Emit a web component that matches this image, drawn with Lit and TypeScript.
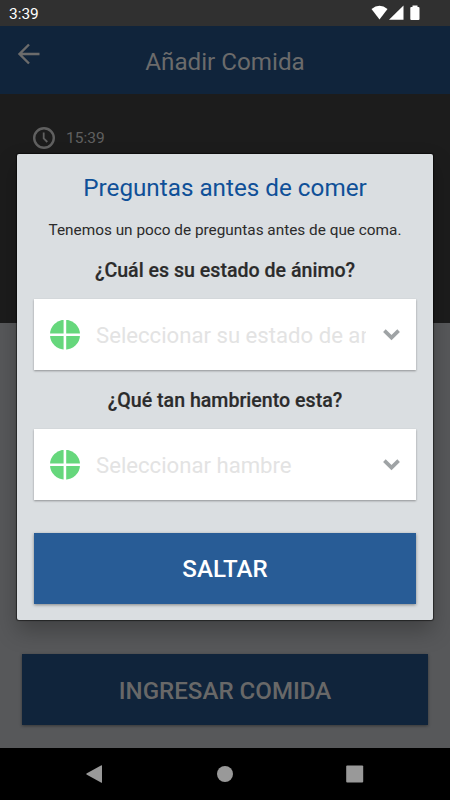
import { LitElement, html, css } from "lit";
import { customElement, property } from "lit/decorators.js";

@customElement("meal-select")
class MealSelect extends LitElement {
  @property() placeholder = "";

  static styles = css`
    :host {
      display: flex;
      align-items: center;
      box-sizing: border-box;
      height: 71px;
      padding: 0 16px;
      background: #fff;
      box-shadow: 0 1px 2px rgba(0, 0, 0, 0.35);
    }
    .mark { flex: none; width: 30px; height: 30px; }
    .text {
      flex: none;
      width: 270px;
      margin-left: 16px;
      overflow: hidden;
      white-space: nowrap;
      text-align: left;
      font: 400 22.15px/30px Roboto, sans-serif;
      color: #e3e3e3;
    }
    .chevron { flex: none; width: 17px; height: 12px; margin-left: 17px; }
  `;

  render() {
    return html`
      <svg class="mark" viewBox="0 0 30 30">
        <circle cx="15" cy="14.7" r="15" fill="#66d77c" />
        <path d="M14.9 -1V31M0 14.7H30" stroke="#fff" stroke-width="2.6" />
      </svg>
      <div class="text">${this.placeholder}</div>
      <svg class="chevron" viewBox="0 0 17 12">
        <path d="M1.4 1.6L8.5 8.6L15.6 1.6" fill="none" stroke="#9fa3a5" stroke-width="3.7" />
      </svg>
    `;
  }
}

@customElement("app-root")
class AppRoot extends LitElement {
  static styles = css`
    :host {
      display: flex;
      flex-direction: column;
      position: relative;
      width: 450px;
      height: 800px;
      overflow: hidden;
      font-family: Roboto, sans-serif;
      background: #57585a;
    }
    .status {
      display: flex;
      align-items: center;
      justify-content: space-between;
      box-sizing: border-box;
      height: 26px;
      padding: 0 29px 0 9px;
      background: #303030;
      color: #fff;
      font-size: 15.4px;
    }
    .clock { padding-top: 2px; }
    .signals { width: 50px; height: 18px; }
    .header {
      display: grid;
      grid-template-columns: 60px 1fr 60px;
      height: 68px;
      background: #10243b;
      color: #6b6b6b;
    }
    .back { width: 24px; height: 24px; margin: 16px 0 0 17px; }
    .title {
      margin-top: 21px;
      text-align: center;
      font-size: 24.2px;
      line-height: 30px;
    }
    .summary {
      box-sizing: border-box;
      height: 229px;
      padding: 32px 33px 0;
      background: #1c1c1c;
    }
    .time {
      display: flex;
      align-items: center;
      gap: 11px;
      color: #606060;
      font-size: 15.5px;
      line-height: 24px;
    }
    .dial { width: 22px; height: 22px; margin-bottom: 1px; }
    .content {
      flex: 1;
      display: flex;
      flex-direction: column;
      justify-content: flex-end;
      padding: 0 22px 23px;
    }
    .button {
      display: flex;
      align-items: center;
      justify-content: center;
      box-sizing: border-box;
      height: 71px;
      padding-top: 2px;
      font-size: 24.1px;
      font-weight: 500;
    }
    .submit {
      background: #10243b;
      color: #686868;
      box-shadow: 0 1px 3px rgba(0, 0, 0, 0.4);
    }
    .nav {
      display: grid;
      grid-template-columns: repeat(3, 130px);
      justify-content: center;
      justify-items: center;
      align-items: center;
      height: 52px;
      background: #000;
    }
    .nav svg { width: 20px; height: 20px; fill: #999; }
    .dialog {
      position: absolute;
      left: 17px;
      top: 154px;
      width: 416px;
      height: 466px;
      box-sizing: border-box;
      padding: 19px 17px 0;
      border-radius: 2px;
      background: #dadee1;
      box-shadow: 0 0 1px 1px rgba(0, 0, 0, 0.5), 0 11px 22px rgba(0, 0, 0, 0.26);
      text-align: center;
      color: #2b2b2b;
    }
    .heading { font-size: 24.25px; line-height: 30px; color: #0f5098; }
    .intro { margin-top: 17px; font-size: 15.35px; line-height: 20px; }
    .question { font-size: 19.6px; font-weight: 500; line-height: 24px; -webkit-text-stroke: 0.2px; }
    .mood { margin: 19px 0 16px; }
    .hunger { margin: 19px 0 16px; }
    .skip {
      height: 70.5px;
      margin-top: 33px;
      background: #285c96;
      color: #fff;
      box-shadow: 0 1px 3px rgba(0, 0, 0, 0.4);
    }
  `;

  render() {
    return html`
      <div class="status">
        <span class="clock">3:39</span>
        <svg class="signals" viewBox="0 0 50 18" fill="#fff">
          <path d="M.5 5Q8.5-1.5 16.5 5L8.5 15.5Z" />
          <path d="M32.5 1.5V15.8H18Z" />
          <path d="M40.3 3H41.5V1.5H46.500V3H47.500a1 1 0 0 1 1 1V15a1 1 0 0 1-1 1H40.300a1 1 0 0 1-1-1V4a1 1 0 0 1 1-1Z" />
        </svg>
      </div>
      <div class="header">
        <svg class="back" viewBox="0 0 24 24" fill="none" stroke="#6b6b6b" stroke-width="2.4">
          <path d="M22.5 12H2.5M12 2.5L2.5 12L12 21.5" />
        </svg>
        <div class="title">Añadir Comida</div>
      </div>
      <div class="summary">
        <div class="time">
          <svg class="dial" viewBox="0 0 22 22" fill="none" stroke="#606060">
            <circle cx="11" cy="11" r="9.8" stroke-width="2.4" />
            <path d="M10.7 5.5V11.4L14.3 15" stroke-width="1.8" />
          </svg>
          <span>15:39</span>
        </div>
      </div>
      <div class="content"><div class="button submit">INGRESAR COMIDA</div></div>
      <div class="nav">
        <svg viewBox="0 0 20 20"><path d="M17 1.5V18.5Q17 19 16.4 18.7L1.5 10.5Q1 10 1.5 9.5L16.4 1.3Q17 1 17 1.5Z" /></svg>
        <svg viewBox="0 0 20 20"><circle cx="10" cy="10" r="8" /></svg>
        <svg viewBox="0 0 20 20"><rect x="1.2" y="1.5" width="17" height="17" rx="1" /></svg>
      </div>
      <div class="dialog">
        <div class="heading">Preguntas antes de comer</div>
        <div class="intro">Tenemos un poco de preguntas antes de que coma.</div>
        <div class="question mood">¿Cuál es su estado de ánimo?</div>
        <meal-select placeholder="Seleccionar su estado de animo"></meal-select>
        <div class="question hunger">¿Qué tan hambriento esta?</div>
        <meal-select placeholder="Seleccionar hambre"></meal-select>
        <div class="button skip">SALTAR</div>
      </div>
    `;
  }
}
